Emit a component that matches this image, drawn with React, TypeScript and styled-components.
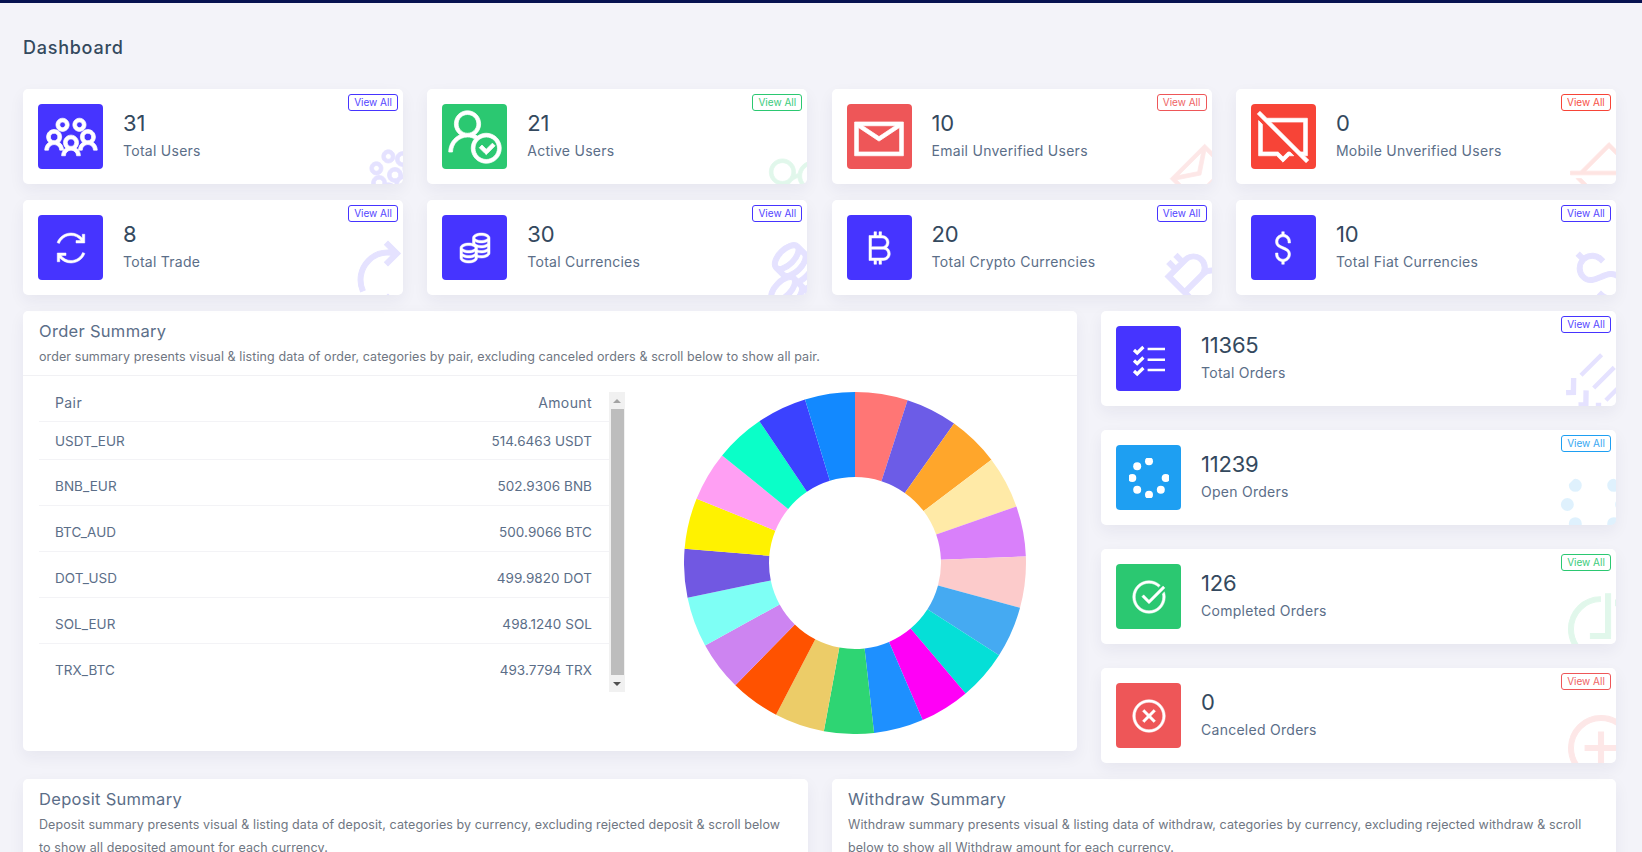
import React from "react";
import styled, { createGlobalStyle } from "styled-components";
import {
  LiaUsersSolid,
  LiaUserCheckSolid,
  LiaEnvelope,
  LiaCommentSlashSolid,
  LiaSyncSolid,
  LiaCoinsSolid,
  LiaBitcoin,
  LiaDollarSignSolid,
  LiaCheckCircle,
  LiaTimesCircle,
} from "react-icons/lia";

const tones = {
  primary: "#4634ff",
  success: "#2bc871",
  danger: "#ee5658",
  red: "#f74437",
  info: "#1e9ff2",
};
type Tone = keyof typeof tones;
type GlyphProps = { size?: number };
type Glyph = React.ComponentType<GlyphProps>;

const GlobalStyle = createGlobalStyle`
  html, body {
    margin: 0;
    height: 100%;
    overflow: hidden;
    background: #f3f3f9;
  }
  body {
    font-family: Inter, "Open Sans", sans-serif;
    color: #34495e;
  }
  * { box-sizing: border-box; }
`;

const TopBar = styled.div`
  height: 3px;
  background: #071251;
`;

const Page = styled.main`
  padding: 0 26px 0 23px;
`;

const PageTitle = styled.h1`
  margin: 0;
  height: 86px;
  padding-top: 32px;
  font-size: 18px;
  line-height: 26px;
  font-weight: 500;
  letter-spacing: 0.75px;
  color: #34495e;
`;

const WidgetGrid = styled.section`
  display: grid;
  grid-template-columns: repeat(4, 380px);
  column-gap: 24.3px;
  row-gap: 16px;
`;

const MainRow = styled.section`
  display: grid;
  grid-template-columns: 1054px 515px;
  column-gap: 24px;
  margin-top: 16px;
`;

const SideColumn = styled.div`
  display: flex;
  flex-direction: column;
  gap: 24px;
`;

const WidgetCard = styled.div`
  position: relative;
  display: flex;
  align-items: center;
  gap: 20px;
  height: 95px;
  padding: 15px;
  background: #fff;
  border-radius: 5px;
  overflow: hidden;
  box-shadow: 0 6px 16px rgba(34, 38, 86, 0.06);
`;

const IconBox = styled.div<{ $tone: Tone }>`
  display: flex;
  flex: none;
  align-items: center;
  justify-content: center;
  width: 65px;
  height: 65px;
  border-radius: 4px;
  color: #fff;
  background: ${(p) => tones[p.$tone]};
  svg {
    stroke-width: 0.4;
  }
`;

const WidgetText = styled.div`
  display: flex;
  flex-direction: column;
  margin-top: 1px;
`;

const WidgetValue = styled.span`
  font-size: 22px;
  line-height: 27px;
  font-weight: 400;
  letter-spacing: -0.2px;
  color: #34495e;
`;

const WidgetLabel = styled.span`
  font-size: 14px;
  line-height: 27px;
  letter-spacing: 0.27px;
  color: #5b6e88;
`;

const ViewAll = styled.a<{ $tone: Tone }>`
  position: absolute;
  top: 5px;
  right: 5px;
  width: 50px;
  height: 17px;
  border: 1px solid ${(p) => tones[p.$tone]};
  border-radius: 3px;
  font-size: 10px;
  line-height: 15px;
  text-align: center;
  color: ${(p) => tones[p.$tone]};
  background: #fff;
  z-index: 1;
  span {
    opacity: 0.92;
  }
`;

const OverlayIcon = styled.div<{ $tone: Tone; $right: number; $bottom: number }>`
  position: absolute;
  right: ${(p) => p.$right}px;
  bottom: ${(p) => p.$bottom}px;
  display: flex;
  color: ${(p) => tones[p.$tone]};
  opacity: 0.14;
  transform: rotate(-45deg);
  svg {
    stroke-width: 0.4;
  }
`;

const ChecklistGlyph = ({ size = 40 }: GlyphProps) => (
  <svg width={size} height={size} viewBox="0 0 40 40" fill="none" stroke="currentColor">
    <path d="M18.6 10H36M18.6 20.7H36M18.6 31H36" strokeWidth="2.6" />
    <path
      d="M5 11l3.2 3L14.4 8M5 21.5l3.2 3 6.2-6M5 32l3.2 3 6.2-6"
      strokeWidth="3.2"
    />
  </svg>
);

const dotAngles = [0, -45, -90, -135, 180, 135, 90];

const DotsGlyph = ({ size = 40 }: GlyphProps) => (
  <svg width={size} height={size} viewBox="0 0 40 40" fill="currentColor">
    {dotAngles.map((deg) => (
      <circle
        key={deg}
        cx={20 + 16.7 * Math.sin((deg * Math.PI) / 180)}
        cy={20 - 16.7 * Math.cos((deg * Math.PI) / 180)}
        r={4}
      />
    ))}
  </svg>
);

type WidgetProps = {
  tone: Tone;
  value: string;
  label: string;
  icon: Glyph;
  size: number;
  overlaySize?: number;
  right?: number;
  bottom?: number;
};

const Widget = ({
  tone,
  value,
  label,
  icon: Icon,
  size,
  overlaySize = 80,
  right = -25,
  bottom = -25,
}: WidgetProps) => (
  <WidgetCard>
    <IconBox $tone={tone}>
      <Icon size={size} />
    </IconBox>
    <WidgetText>
      <WidgetValue>{value}</WidgetValue>
      <WidgetLabel>{label}</WidgetLabel>
    </WidgetText>
    <ViewAll $tone={tone}>
      <span>View All</span>
    </ViewAll>
    <OverlayIcon $tone={tone} $right={right} $bottom={bottom}>
      <Icon size={overlaySize} />
    </OverlayIcon>
  </WidgetCard>
);

const SummaryCard = styled.article`
  background: #fff;
  border-radius: 5px;
  box-shadow: 0 6px 16px rgba(34, 38, 86, 0.06);
`;

const OrderCard = styled(SummaryCard)`
  height: 440px;
`;

const CardHeader = styled.header<{ $ruled?: boolean }>`
  padding: 8px 16px 0;
  height: ${(p) => (p.$ruled ? "65px" : "auto")};
  border-bottom: ${(p) => (p.$ruled ? "1px solid #f1f1f4" : "none")};
`;

const CardTitle = styled.h2`
  margin: 0;
  font-size: 16.5px;
  line-height: 24px;
  font-weight: 400;
  letter-spacing: 0.3px;
  color: #5b6e88;
`;

const CardDesc = styled.p`
  margin: 2px 0 0;
  font-size: 12.5px;
  line-height: 23px;
  letter-spacing: 0.09px;
  color: #6f7682;
`;

const OrderBody = styled.div`
  display: flex;
  padding: 16px 0 0 16px;
`;

const TableArea = styled.div`
  display: flex;
  width: 586px;
  height: 300px;
`;

const PairTable = styled.div`
  flex: 1;
`;

const PairHead = styled.div`
  display: flex;
  justify-content: space-between;
  align-items: center;
  height: 30px;
  padding: 0 17px 8px 16px;
  font-size: 14px;
  letter-spacing: 0.4px;
  color: #5b6e88;
  border-bottom: 1px solid #f3f3f6;
`;

const PairRow = styled.div<{ $first?: boolean }>`
  display: flex;
  justify-content: space-between;
  align-items: center;
  height: ${(p) => (p.$first ? "38px" : "46px")};
  padding: ${(p) => (p.$first ? "0 17px 0 16px" : "6px 17px 0 16px")};
  font-size: 13.5px;
  letter-spacing: 0.05px;
  color: #5b6e88;
  border-bottom: 1px solid #f3f3f6;
  &:last-child {
    border-bottom: none;
  }
`;

const Rail = styled.div`
  display: flex;
  flex: none;
  flex-direction: column;
  align-items: center;
  width: 16px;
  background: #f1f1f1;
`;

const RailButton = styled.div`
  display: flex;
  flex: none;
  align-items: center;
  justify-content: center;
  height: 17px;
`;

const RailArrow = styled.i<{ $down?: boolean }>`
  width: 0;
  height: 0;
  border-left: 4px solid transparent;
  border-right: 4px solid transparent;
  border-top: ${(p) => (p.$down ? "4px solid #505050" : "none")};
  border-bottom: ${(p) => (p.$down ? "none" : "4px solid #a3a3a3")};
`;

const RailThumb = styled.div`
  flex: 1;
  width: 13px;
  background: #bdbdbd;
`;

const ChartWrap = styled.div`
  flex: none;
  margin-left: 59px;
`;

const BottomRow = styled.section`
  display: grid;
  grid-template-columns: 785px 784px;
  column-gap: 24px;
  margin-top: 16px;
`;

const SummaryPad = styled.div`
  height: 200px;
`;

const pairs = [
  ["USDT_EUR", "514.6463 USDT"],
  ["BNB_EUR", "502.9306 BNB"],
  ["BTC_AUD", "500.9066 BTC"],
  ["DOT_USD", "499.9820 DOT"],
  ["SOL_EUR", "498.1240 SOL"],
  ["TRX_BTC", "493.7794 TRX"],
];

const stops = [
  0, 17.9, 35.4, 52.9, 70.7, 87.8, 105.2, 122.6, 139.7, 156.7, 173.6, 190.5,
  207.5, 224.4, 241.2, 258.3, 274.8, 292.1, 309, 326, 343, 360,
];

const sliceColors = [
  "#ff7675", "#6c5ce7", "#ffa62b", "#ffeaa7", "#d980fa", "#fccbcb", "#45aaf2",
  "#05dfd7", "#ff00f6", "#1e90ff", "#2ed573", "#eccc68", "#ff5200", "#cd84f1",
  "#7efff5", "#7158e2", "#fff200", "#ff9ff3", "#0affc8", "#3b42ff", "#1289ff",
];

const polar = (r: number, deg: number) => {
  const a = (deg * Math.PI) / 180;
  return `${(171 + r * Math.sin(a)).toFixed(2)} ${(171 - r * Math.cos(a)).toFixed(2)}`;
};

const slicePath = (from: number, to: number) =>
  `M${polar(171, from)} A171 171 0 0 1 ${polar(171, to)} L${polar(86, to)} A86 86 0 0 0 ${polar(86, from)} Z`;

const PairDonut = () => (
  <svg width={342} height={342} viewBox="0 0 342 342">
    {sliceColors.map((color, i) => (
      <path key={color} d={slicePath(stops[i], stops[i + 1])} fill={color} />
    ))}
  </svg>
);

const App = () => (
  <>
    <GlobalStyle />
    <TopBar />
    <Page>
      <PageTitle>Dashboard</PageTitle>
      <WidgetGrid>
        <Widget tone="primary" value="31" label="Total Users" icon={LiaUsersSolid} size={60} overlaySize={60} right={-18} bottom={-17} />
        <Widget tone="success" value="21" label="Active Users" icon={LiaUserCheckSolid} size={60} overlaySize={60} right={-20} bottom={-22} />
        <Widget tone="danger" value="10" label="Email Unverified Users" icon={LiaEnvelope} size={60} overlaySize={60} right={-16} bottom={-18} />
        <Widget tone="red" value="0" label="Mobile Unverified Users" icon={LiaCommentSlashSolid} size={60} overlaySize={60} right={-19} bottom={-19} />
        <Widget tone="primary" value="8" label="Total Trade" icon={LiaSyncSolid} size={40} />
        <Widget tone="primary" value="30" label="Total Currencies" icon={LiaCoinsSolid} size={40} />
        <Widget tone="primary" value="20" label="Total Crypto Currencies" icon={LiaBitcoin} size={40} />
        <Widget tone="primary" value="10" label="Total Fiat Currencies" icon={LiaDollarSignSolid} size={40} bottom={-22} />
      </WidgetGrid>
      <MainRow>
        <OrderCard>
          <CardHeader $ruled>
            <CardTitle>Order Summary</CardTitle>
            <CardDesc>
              order summary presents visual &amp; listing data of order, categories by pair, excluding canceled orders &amp; scroll below to show all pair.
            </CardDesc>
          </CardHeader>
          <OrderBody>
            <TableArea>
              <PairTable>
                <PairHead>
                  <span>Pair</span>
                  <span>Amount</span>
                </PairHead>
                {pairs.map(([pair, amount], i) => (
                  <PairRow key={pair} $first={i === 0}>
                    <span>{pair}</span>
                    <span>{amount}</span>
                  </PairRow>
                ))}
              </PairTable>
              <Rail>
                <RailButton>
                  <RailArrow />
                </RailButton>
                <RailThumb />
                <RailButton>
                  <RailArrow $down />
                </RailButton>
              </Rail>
            </TableArea>
            <ChartWrap>
              <PairDonut />
            </ChartWrap>
          </OrderBody>
        </OrderCard>
        <SideColumn>
          <Widget tone="primary" value="11365" label="Total Orders" icon={ChecklistGlyph} size={40} overlaySize={67} right={-12} bottom={-13} />
          <Widget tone="info" value="11239" label="Open Orders" icon={DotsGlyph} size={40} overlaySize={65} right={-11} bottom={-12} />
          <Widget tone="success" value="126" label="Completed Orders" icon={LiaCheckCircle} size={40} />
          <Widget tone="danger" value="0" label="Canceled Orders" icon={LiaTimesCircle} size={40} />
        </SideColumn>
      </MainRow>
      <BottomRow>
        <SummaryCard>
          <CardHeader>
            <CardTitle>Deposit Summary</CardTitle>
            <CardDesc>
              Deposit summary presents visual &amp; listing data of deposit, categories by currency, excluding rejected deposit &amp; scroll below to show all deposited amount for each currency.
            </CardDesc>
          </CardHeader>
          <SummaryPad />
        </SummaryCard>
        <SummaryCard>
          <CardHeader>
            <CardTitle>Withdraw Summary</CardTitle>
            <CardDesc>
              Withdraw summary presents visual &amp; listing data of withdraw, categories by currency, excluding rejected withdraw &amp; scroll below to show all Withdraw amount for each currency.
            </CardDesc>
          </CardHeader>
          <SummaryPad />
        </SummaryCard>
      </BottomRow>
    </Page>
  </>
);

export default App;
